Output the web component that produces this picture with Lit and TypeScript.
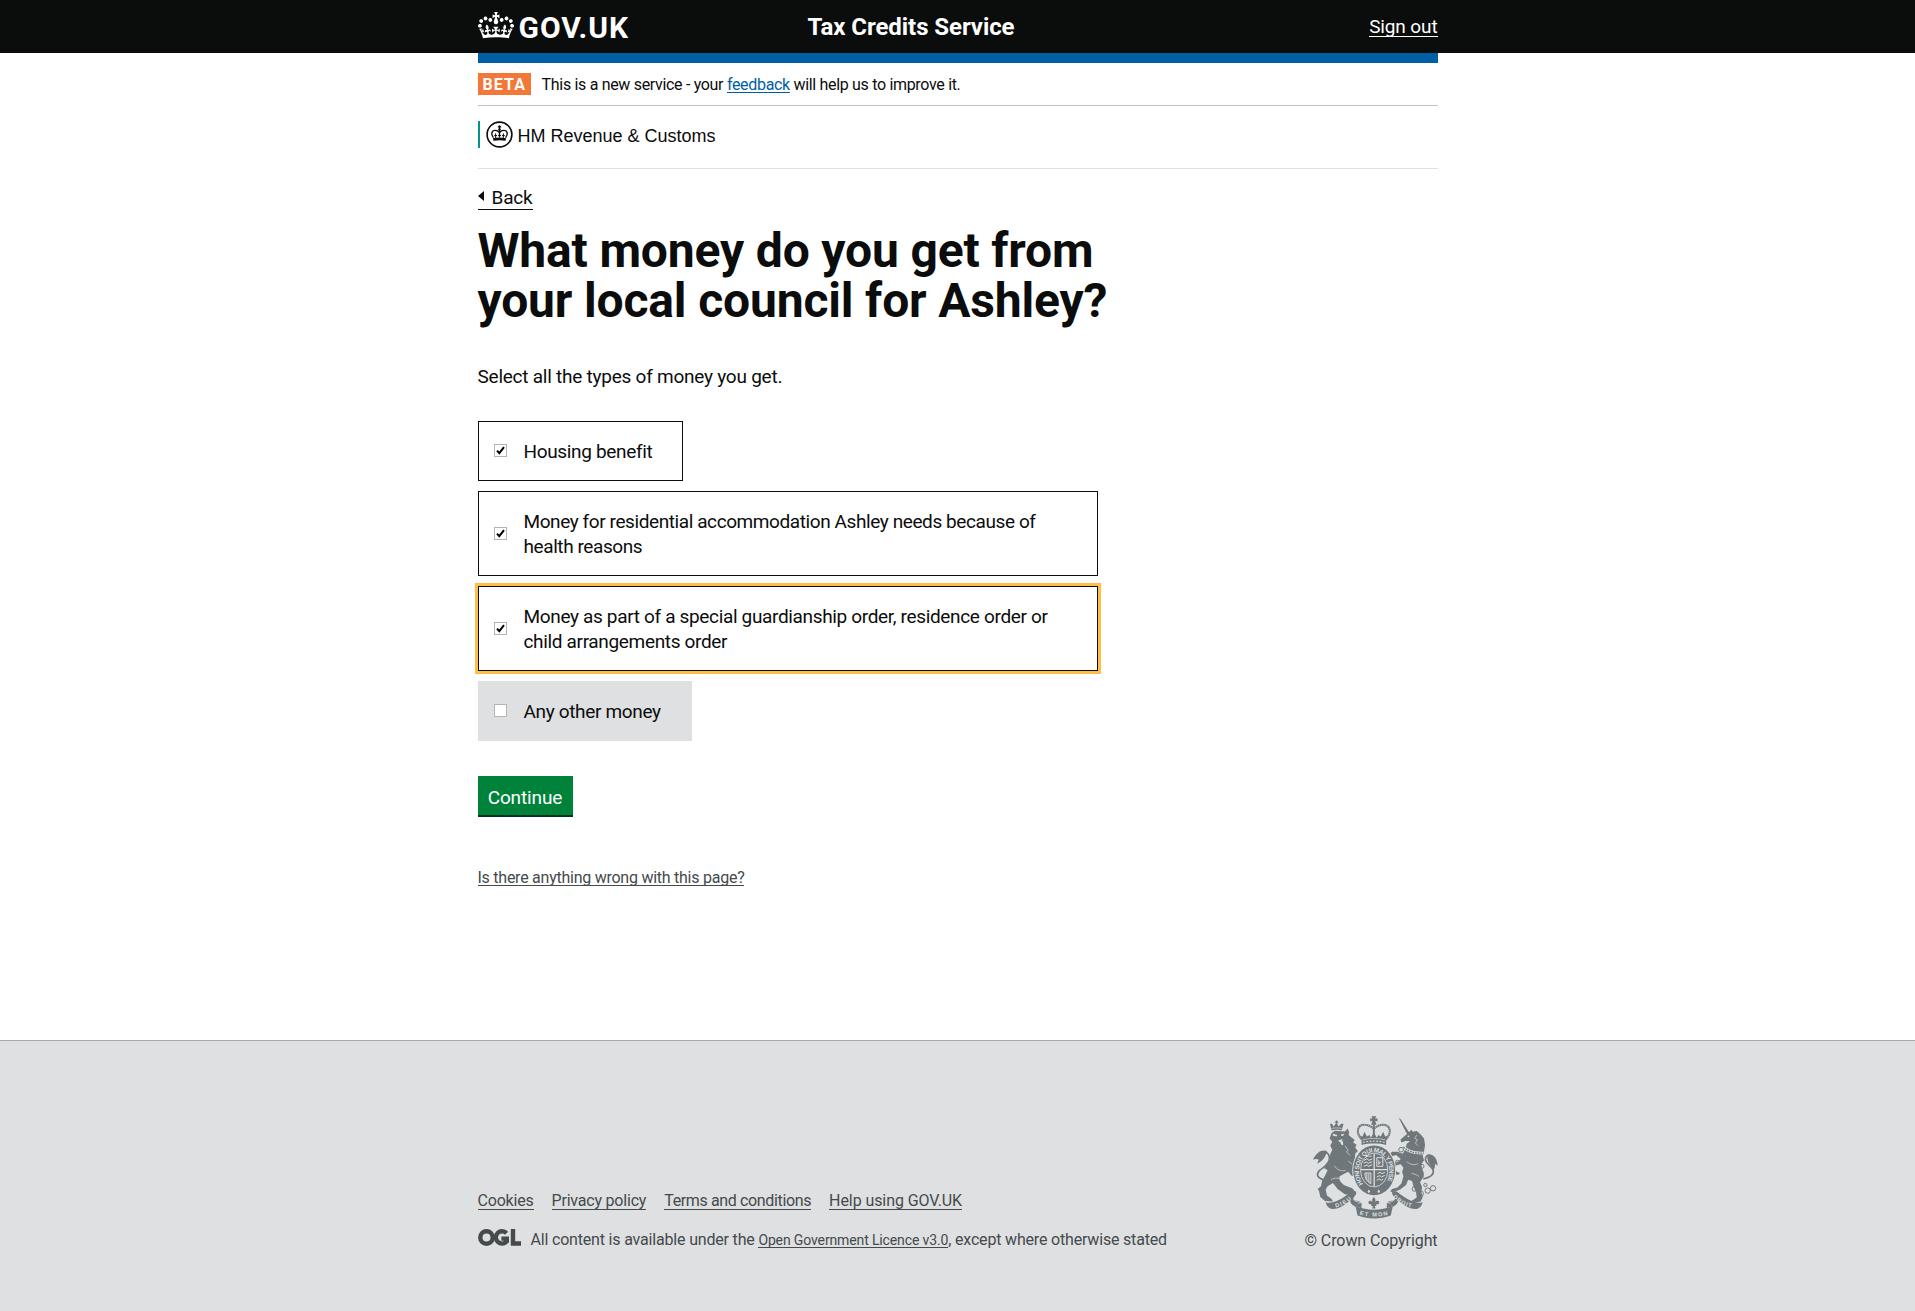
import { LitElement, html, css, svg } from "lit";
import { customElement, property } from "lit/decorators.js";
import { classMap } from "lit/directives/class-map.js";

const crown = svg`<path d="M25 30.2c3.5 1.5 7.7-.2 9.1-3.7 1.5-3.6-.2-7.8-3.9-9.2-3.6-1.4-7.6.3-9.1 3.9-1.4 3.5.3 7.5 3.9 9zM9 39.5c3.6 1.5 7.8-.2 9.2-3.7 1.5-3.6-.2-7.8-3.9-9.1-3.6-1.5-7.6.2-9.1 3.8-1.4 3.5.3 7.5 3.8 9zM4.4 57.2c3.5 1.5 7.7-.2 9.1-3.8 1.5-3.6-.2-7.7-3.9-9.1-3.5-1.5-7.6.3-9.1 3.8-1.4 3.5.3 7.6 3.9 9.1zm38.3-21.4c3.5 1.5 7.7-.2 9.1-3.8 1.5-3.6-.2-7.7-3.9-9.1-3.6-1.5-7.6.3-9.1 3.8-1.3 3.6.4 7.7 3.9 9.1zm64.4-5.6c-3.6 1.5-7.8-.2-9.1-3.7-1.5-3.6.2-7.8 3.8-9.2 3.6-1.4 7.7.3 9.2 3.9 1.3 3.5-.4 7.5-3.9 9zm15.9 9.3c-3.6 1.5-7.7-.2-9.1-3.7-1.5-3.6.2-7.8 3.7-9.1 3.6-1.5 7.7.2 9.2 3.8 1.5 3.5-.3 7.5-3.8 9zm4.7 17.7c-3.6 1.5-7.8-.2-9.2-3.8-1.5-3.6.2-7.7 3.9-9.1 3.6-1.5 7.7.3 9.2 3.8 1.3 3.5-.4 7.6-3.9 9.1zM89.3 35.8c-3.6 1.5-7.8-.2-9.2-3.8-1.4-3.6.2-7.7 3.9-9.1 3.6-1.5 7.7.3 9.2 3.8 1.4 3.6-.3 7.7-3.9 9.1zM69.7 17.7l8.9 4.7V9.3l-8.9 2.8c-.2-.3-.5-.6-.9-.9L72.4 0H59.6l3.5 11.2c-.3.3-.6.5-.9.9l-8.8-2.8v13.1l8.8-4.7c.3.3.6.7.9.9l-5 15.4v.1c-.2.8-.4 1.6-.4 2.4 0 4.1 3.1 7.5 7 8.1h.2c.3 0 .7.1 1 .1.4 0 .7 0 1-.1h.2c4-.6 7.1-4.1 7.1-8.1 0-.8-.1-1.7-.4-2.4V34l-5.1-15.4c.4-.2.7-.6 1-.9zM66 92.8c16.9 0 32.8 1.1 47.1 3.2 4-16.9 8.9-26.7 14-33.5l-9.6-3.4c1 4.9 1.1 7.2 0 10.2-1.5-1.4-3-4.3-4.2-8.7L108.6 76c2.8-2 5-3.2 7.5-3.3-4.4 9.4-10 11.9-13.6 11.2-4.3-.8-6.3-4.6-5.6-7.9 1-4.7 5.7-5.9 8-.5 4.3-8.7-3-11.4-7.6-8.8 7.1-7.2 7.9-13.5 2.1-21.1-8 6.1-8.1 12.3-4.5 20.8-4.7-5.4-12.1-2.5-9.5 6.2 3.4-5.2 7.9-2 7.2 3.1-.6 4.3-6.4 7.8-13.5 7.2-10.3-.9-10.9-8-11.2-13.8 2.5-.5 7.1 1.8 11 7.3L80.2 60c-4.1 4.4-8 5.3-12.3 5.4 1.4-4.4 8-11.6 8-11.6H55.5s6.4 7.2 7.9 11.6c-4.2-.1-8-1-12.3-5.4l1.4 16.4c3.9-5.5 8.5-7.7 10.9-7.3-.3 5.8-.9 12.8-11.1 13.8-7.2.6-12.9-2.9-13.5-7.2-.7-5 3.8-8.3 7.1-3.1 2.7-8.7-4.6-11.6-9.4-6.2 3.7-8.5 3.6-14.7-4.6-20.8-5.8 7.6-5 13.9 2.2 21.1-4.7-2.6-11.9.1-7.7 8.8 2.3-5.5 7.1-4.2 8.1.5.7 3.3-1.3 7.1-5.7 7.9-3.5.7-9-1.8-13.5-11.2 2.5.1 4.7 1.3 7.5 3.3l-4.7-15.4c-1.2 4.4-2.7 7.2-4.3 8.7-1.1-3-.9-5.3 0-10.2l-9.5 3.4c5 6.9 9.9 16.7 14 33.5 14.8-2.1 30.8-3.2 47.7-3.2z"/>`;

@customElement("royal-arms")
class RoyalArms extends LitElement {
  static styles = css`
    :host { display: block; }
    svg { display: block; width: 125px; height: 104px; }
    .f { fill: #6f777b; }
    .s { fill: none; stroke: #6f777b; }
    .bg { fill: #dee0e2; }
    .bs { fill: none; stroke: #dee0e2; }
    .t { fill: #dee0e2; font: bold 17px "Liberation Sans", Arial, sans-serif; }
    .ring { font-size: 19px; }
  `;
  render() {
    return html`<svg viewBox="54 30 376 312">
      <!-- supporter: lion -->
      <path class="s" stroke-width="5" d="M84 224c-20-8-20-18-10-28 12-10 24-14 28-28 4-14-2-28-14-26-8 2-12 8-10 14"/>
      <path class="f" d="M96 138c-16-6-32 4-42 26 8-3 12-2 18 0-4 4-4 8-4 12 10-6 24-16 28-38z"/>
      <path class="f" d="M110 84L120 77 150 79 158 70 163 82 161 90 170 97 179 104 175 112 185 119 181 128 189 138 181 146 180 160 176 176 188 188 194 206 184 216 170 212 160 200 148 206 134 214C130 224 140 236 150 242L172 250 182 262 174 272 150 268 128 252 114 234 98 244 92 254 96 272 110 282 114 290 90 288 76 276 72 258 68 252 78 244 82 226 90 212 98 196 88 190 92 178 104 164 106 148 112 134 106 122 112 110 104 100z"/>
      <path class="f" d="M105 56h6l5 8 8-10 8 10 6-8h8l-6 20c-8-3-22-3-30 0z"/>
      <path class="s" stroke-width="4" d="M125 46v12M120 51h10"/>
      <path class="bs" stroke-width="2" d="M110 70c8-2 22-2 30 0"/>
      <path class="bg" d="M114 86l13 4-2 4-12-3zM138 88l10-2-3 6-6 1zM130 106l13-4-3 8-7 1zM136 112l8-4 1 12-6-1z"/>
      <path class="bs" stroke-width="2" d="M150 122l10 14-6 4 12 12M118 182c8 12 20 18 34 14M108 224c8-5 18-6 26-3M160 168l12 10"/>

      <!-- supporter: unicorn -->
      <path class="f" d="M312 38l7 6 26 41-7 5z"/>
      <path class="f" d="M340 84L350 74 354 80 366 78 378 88 388 100 391 120 388 140 384 152 388 166 380 178 382 190 388 206 382 222 376 232 382 246 380 262 384 276 378 290 356 294 350 288 366 278 364 262 356 244 352 228 340 224 334 240 316 254 296 262 286 260 292 252 308 248 320 236 326 214 322 200 326 188 318 178 306 180 300 190 306 200 316 204 310 210 298 206 290 192 296 178 312 168 318 162 304 150 292 154 284 148 292 140 308 140 324 146 332 132 336 116 346 108 332 108 320 112 317 104 326 96z"/>
      <path class="bs" stroke-width="8" d="M326 126c12 12 32 20 62 18"/>
      <path class="s" stroke-width="4" stroke-dasharray="5 3" d="M326 126c12 12 32 20 62 18"/>
      <circle class="bg" cx="341" cy="94" r="2.5"/>
      <path class="bs" stroke-width="2" d="M366 90l-6 10 8 4-6 10 8 8M336 170c10 8 22 12 34 6M350 206c10 0 18 4 24 10"/>
      <path class="s" stroke-width="5" d="M386 222c18-4 32-10 30-24-2-14-22-20-24-34 0-12 10-18 18-10"/>
      <path class="f" d="M398 150c14-6 30 6 31 32l-8-6c0 8 0 12-4 18-8-10-22-24-19-44z"/>
      <g class="s" stroke-width="3">
        <circle cx="319" cy="134" r="7"/><circle cx="308" cy="172" r="6"/><circle cx="382" cy="184" r="6"/>
        <circle cx="380" cy="214" r="6"/><circle cx="359" cy="252" r="7"/><circle cx="378" cy="266" r="8"/>
        <circle cx="399" cy="257" r="8"/><circle cx="415" cy="250" r="8"/><circle cx="392" cy="240" r="5"/>
      </g>

      <!-- imperial crown -->
      <path class="f" d="M230 33h14l-3 8 7-2v10l-7-2 4 12h-16l4-12-7 2v-10l7 2z"/>
      <path class="s" stroke-width="6" d="M202 104c-22-22-14-46 8-45 12 0 20 6 27 12 7-6 16-12 27-12 22 0 30 23 8 45"/>
      <path class="bs" stroke-width="2.4" stroke-dasharray="2.5 4" d="M202 104c-22-22-14-46 8-45 12 0 20 6 27 12 7-6 16-12 27-12 22 0 30 23 8 45"/>
      <path class="s" stroke-width="6" d="M237 58v38"/>
      <path class="f" d="M200 104l-5-12 8 2 6-14 7 14 8-4 4 8 9-16 9 16 4-8 8 4 7-14 6 14 8-2-5 12 0 16c-22-6-52-6-74 0z"/>
      <path class="bs" stroke-width="3" stroke-dasharray="6 4" d="M204 112c22-5 44-5 66 0"/>
      <path class="bs" stroke-width="2" d="M203 104c20-5 46-5 68 0"/>

      <!-- garter and shield -->
      <ellipse class="bg" cx="238" cy="196" rx="66" ry="78"/>
      <ellipse class="f" cx="238" cy="196" rx="63" ry="75"/>
      <ellipse class="bs" cx="238" cy="195" rx="41" ry="51" stroke-width="2.5"/>
      <path id="garter" fill="none" d="M205 237A45.5 56.5 0 1 1 271 237"/>
      <text class="t ring"><textPath href="#garter" textLength="232">HONI SOIT QUI MAL Y PENSE</textPath></text>
      <path class="bs" stroke-width="4" d="M238 146v98M198 194h80"/>
      <g class="bs" stroke-width="3">
        <path d="M208 166l8-5 6 5 10-4M206 174l9-3 5 4 12-5M207 184l9-4 6 4 10-5M212 156l8-3 10 1"/>
        <path d="M248 206l8-4 6 4 8-4M246 216l9-4 5 4 10-5M246 226l7-4 6 4 6-4"/>
        <path d="M246 158h18v26h-18zM252 166v12l6-8"/>
        <path d="M210 204c0 16 6 26 18 32V204zM216 206v20M222 206v26"/>
      </g>
      <path class="bg" d="M218 260l4-6 4 6-4 5zM248 260l4-6 4 6-4 5z"/>
      <path class="f" d="M237 276c6 6 6 10 4 16 6-8 14-4 12 2-1 4-5 5-8 3 1 6-3 6-5 6l2 8h-10l2-8c-3 0-6 0-5-6-3 2-7 1-8-3-2-6 6-10 12-2-2-6-2-10 4-16z"/>

      <!-- motto scroll -->
      <path class="f" d="M92 292c16 6 42-2 78-32l14 0 0 6c-2 8-10 12-8 18 4 6 16 2 22 8-10 4-14 8-16 14-6-4-16-8-16-20-20 18-40 28-56 26-10-2-16-10-18-20z"/>
      <path class="f" d="M384 292c-16 6-42-2-78-32l-14 0 0 6c2 8 10 12 8 18-4 6-16 2-22 8 10 4 14 8 16 14 6-4 16-8 16-20 20 18 40 28 56 26 10-2 16-10 18-20z"/>
      <path class="bs" stroke-width="2" d="M184 270c-4 8-10 10-6 16 6 6 16 4 24 10M292 270c4 8 10 10 6 16-6 6-16 4-24 10"/>
      <path class="f" d="M182 304c36 14 74 14 112 0l-6 28c-32 12-68 12-100 0z"/>
      <path class="f" d="M182 304c4-8 10-10 18-10l0 16zM294 304c-4-8-10-10-18-10l0 16z"/>
      <path id="dieu" fill="none" d="M122 308c20-4 36-14 54-30"/>
      <text class="t"><textPath href="#dieu" textLength="54">DIEU</textPath></text>
      <path id="mon" fill="none" d="M194 329c30 8 58 8 90 0"/>
      <text class="t"><textPath href="#mon" textLength="86">ET MON</textPath></text>
      <path id="droit" fill="none" d="M294 277c16 16 36 28 62 32"/>
      <text class="t"><textPath href="#droit" textLength="64">DROIT</textPath></text>
    </svg>`;
  }
}

@customElement("choice-block")
class ChoiceBlock extends LitElement {
  @property({ type: Boolean }) checked = false;
  @property({ type: Boolean }) focused = false;
  static styles = css`
    :host { display: block; letter-spacing: -0.34px; }
    .block {
      box-sizing: border-box; width: fit-content; max-width: 620px;
      display: flex; align-items: center; gap: 17px;
      padding: 17px 30px 16px 15px; border: 1px solid #dee0e2; background: #dee0e2;
      font: 19px/25px Roboto, sans-serif; color: #0b0c0c;
    }
    .checked { border-color: #0b0c0c; background: #fff; }
    .focused { outline: 3px solid #ffbf47; }
    .box { flex: none; width: 13px; height: 13px; margin-top: -2px; display: block; }
  `;
  render() {
    return html`<label class=${classMap({ block: true, checked: this.checked, focused: this.focused })}>
      <svg class="box" viewBox="0 0 13 13">
        <rect x=".5" y=".5" width="12" height="12" fill="#fff" stroke="#b4b4b4"/>
        ${this.checked ? svg`<path d="M3 6.6l2.3 2.6L10 3.2" fill="none" stroke="#000" stroke-width="2"/>` : ""}
      </svg>
      <span><slot></slot></span>
    </label>`;
  }
}

@customElement("app-root")
class AppRoot extends LitElement {
  static styles = css`
    :host { display: flex; flex-direction: column; height: 1311px; background: #fff; color: #0b0c0c; font: 19px/25px Roboto, sans-serif; }
    .wrap { width: 960px; margin: 0 auto; }
    a { color: inherit; text-decoration: none; }
    .header { background: #0b0c0c; color: #fff; height: 53px; }
    .header .wrap { display: grid; grid-template-columns: 330px 1fr auto; align-items: start; height: 53px; }
    .logo { display: flex; gap: 5px; padding-top: 12px; }
    .logo svg { width: 36px; height: 26.5px; fill: #fff; }
    .logo span { font-weight: 700; font-size: 30px; line-height: 31px; letter-spacing: .95px; }
    .service { font-weight: 700; font-size: 24px; line-height: 30px; padding-top: 12px; letter-spacing: -.07px; }
    .signout { line-height: 22px; margin-top: 16px; height: 20px; border-bottom: 1px solid #fff; letter-spacing: -.12px; }
    .bar { height: 10px; background: #005ea5; }
    .phase { display: flex; align-items: center; gap: 11px; height: 42px; border-bottom: 1px solid #bfc1c3; font-size: 16px; }
    .tag { background: #f47738; color: #fff; font-weight: 700; font-size: 16px; line-height: 23px; height: 22px; padding: 0 4.5px 0 5px; letter-spacing: 1.1px; }
    .phase p { margin: 2px 0 0; line-height: 20px; letter-spacing: -.32px; }
    .feedback { color: #005ea5; display: inline-block; line-height: 15px; border-bottom: 1px solid #005ea5; }
    .org { display: flex; align-items: flex-start; height: 47px; padding-top: 15px; border-bottom: 1px solid #dee0e2; }
    .org .mark { display: flex; gap: 5px; padding-left: 6px; border-left: 2px solid #009390; height: 27px; font: 18px/31px "Liberation Sans", Arial, sans-serif; }
    .org svg { width: 27px; height: 27px; }
    .back { display: flex; align-items: center; width: 55px; height: 25px; line-height: 27px; margin-top: 15px; border-bottom: 1px solid #0b0c0c; letter-spacing: -.17px; }
    .back i { border: 5px solid transparent; border-left: 0; border-right: 6px solid #0b0c0c; margin: -2px 8px 0 0; }
    .back span { margin-top: 1px; }
    h1 { margin: 16px 0 0; font-size: 48px; line-height: 50px; letter-spacing: -.16px; }
    .hint { margin: 38px 0 0; letter-spacing: -.24px; }
    .choices { display: flex; flex-direction: column; gap: 10px; margin-top: 32px; }
    .dense { letter-spacing: -.41px; }
    button { display: block; margin: 35px 0 0; width: 95px; height: 39px; padding: 3px 0 0; border: 0; background: #00823b; box-shadow: 0 2px 0 #003618; color: #fff; font: 19px/25px Roboto, sans-serif; letter-spacing: -.11px; }
    .wrong { display: block; width: fit-content; margin-top: 52px; font-size: 16px; line-height: 21px; height: 18px; border-bottom: 1px solid #454a4c; color: #454a4c; letter-spacing: -.25px; }
    .main { flex: none; height: 987px; }
    .footer { flex: 1; background: #dee0e2; border-top: 1px solid #a1acb2; color: #454a4c; font-size: 16px; line-height: 20px; }
    .footer .wrap { display: flex; justify-content: space-between; padding-top: 74px; }
    .left { padding-top: 76px; }
    .links { display: flex; gap: 18px; }
    .links a { height: 18px; line-height: 20px; border-bottom: 1px solid #454a4c; letter-spacing: -.2px; }
    .links .terms { letter-spacing: -.36px; }
    .links .help { letter-spacing: -.08px; }
    .licence { display: flex; align-items: flex-start; gap: 10px; margin-top: 17px; }
    .licence svg { width: 43px; height: 17px; margin-top: 2px; }
    .licence p { margin: 3px 0 0; line-height: 20px; letter-spacing: -.18px; }
    .licence a { font-size: 14px; display: inline-block; line-height: 14px; border-bottom: 1px solid #454a4c; letter-spacing: -.13px; }
    .right { display: flex; flex-direction: column; align-items: flex-end; }
    .copy { margin-top: 12px; letter-spacing: -.09px; }
  `;
  render() {
    return html`
      <header class="header"><div class="wrap">
        <a class="logo"><svg viewBox="0 0 132 97">${crown}</svg><span>GOV.UK</span></a>
        <div class="service">Tax Credits Service</div>
        <a class="signout">Sign out</a>
      </div></header>
      <main class="main"><div class="wrap">
        <div class="bar"></div>
        <div class="phase"><strong class="tag">BETA</strong><p>This is a new service - your <a class="feedback">feedback</a> will help us to improve it.</p></div>
        <div class="org"><div class="mark">
          <svg viewBox="0 0 27 27">
            <circle cx="13.5" cy="13.5" r="12.4" fill="#fff" stroke="#0b0c0c" stroke-width="1.6"/>
            <g fill="none" stroke="#0b0c0c">
              <path stroke-width="1.3" d="M13.5 4.2v12M11.8 5.8h3.4"/>
              <path stroke-width="1.4" d="M7.4 16.6C4.6 13 5.6 9.6 8.8 9.4c2.4-.1 3.8 1 4.7 2.2.9-1.2 2.3-2.3 4.7-2.2 3.2.2 4.2 3.6 1.4 7.2"/>
              <path d="M9.6 12.4v4.4M17.4 12.4v4.4M8.2 14.6h2.8M16 14.6h2.8M12 14.4h3"/>
              <path stroke-width="2.6" d="M7.2 18.6c4.2-1 8.4-1 12.6 0"/>
            </g>
            <circle cx="13.5" cy="8.4" r="1.2" fill="#0b0c0c"/>
          </svg><span>HM Revenue &amp; Customs</span></div></div>
        <a class="back"><i></i><span>Back</span></a>
        <h1>What money do you get from<br>your local council for Ashley?</h1>
        <p class="hint">Select all the types of money you get.</p>
        <div class="choices">
          <choice-block checked>Housing benefit</choice-block>
          <choice-block class="dense" checked>Money for residential accommodation Ashley needs because of health reasons</choice-block>
          <choice-block checked focused>Money as part of a special guardianship order, residence order or child arrangements order</choice-block>
          <choice-block>Any other money</choice-block>
        </div>
        <button>Continue</button>
        <a class="wrong">Is there anything wrong with this page?</a>
      </div></main>
      <footer class="footer"><div class="wrap">
        <div class="left">
          <nav class="links"><a>Cookies</a><a>Privacy policy</a><a class="terms">Terms and conditions</a><a class="help">Help using GOV.UK</a></nav>
          <div class="licence">
            <svg viewBox="0 0 43 17" fill="none" stroke="#454a4c" stroke-width="4.4">
              <circle cx="8.5" cy="8.5" r="6.2"/>
              <path d="M28.6 4.2A6.2 6.2 0 1 0 28.8 12.4V9.6H23.4M35 0v14.5h8"/>
            </svg>
            <p>All content is available under the <a>Open Government Licence v3.0</a>, except where otherwise stated</p>
          </div>
        </div>
        <div class="right"><royal-arms></royal-arms><div class="copy">© Crown Copyright</div></div>
      </div></footer>`;
  }
}
